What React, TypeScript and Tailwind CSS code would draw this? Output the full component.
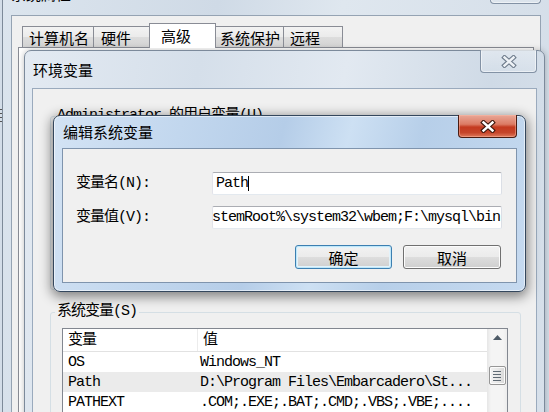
import React from "react";

const CJK = "font-['Noto_Sans_CJK_SC',sans-serif]";
const MONO = "font-['Liberation_Mono','Noto_Sans_CJK_SC',monospace] tracking-[-1px]";

function CloseX({ fill, outline }: { fill: string; outline: string }) {
  return (
    <svg width="16" height="13" viewBox="0 0 16 13">
      <path d="M3.5 2.5 L12.5 10.5 M12.5 2.5 L3.5 10.5" stroke={outline} strokeWidth="4.6" strokeLinecap="square" fill="none" />
      <path d="M3.5 2.5 L12.5 10.5 M12.5 2.5 L3.5 10.5" stroke={fill} strokeWidth="2.4" strokeLinecap="square" fill="none" />
    </svg>
  );
}

function InactiveClose({ className }: { className: string }) {
  return (
    <div
      className={`${className} -mt-px flex items-center justify-center rounded-b-[4px] border border-t-0 border-[#8392a5] bg-[linear-gradient(180deg,rgba(255,255,255,0.35),rgba(255,255,255,0.1))] shadow-[inset_0_0_0_1px_rgba(255,255,255,0.5)]`}
    >
      <CloseX fill="#eef2f6" outline="#6f7c8c" />
    </div>
  );
}

function Tab({ label, w, pl, selected, extra }: { label: string; w: string; pl: string; selected?: boolean; extra: string }) {
  return (
    <div
      className={`${w} ${pl} ${extra} ${CJK} flex items-center text-[15px] leading-none text-black border border-b-0 border-[#898c95] ${
        selected
          ? "h-[25px] -mb-px relative z-10 bg-white pb-[2px]"
          : "h-[21px] bg-[linear-gradient(180deg,#f3f3f3_0%,#ebebeb_50%,#dddddd_51%,#d3d3d3_100%)] pt-[1px]"
      }`}
    >
      {label}
    </div>
  );
}

function TextBox({ children, className }: { children: React.ReactNode; className?: string }) {
  return (
    <div
      className={`w-[290px] h-[23px] bg-white border border-[#abadb3] border-l-[#e2e3ea] border-r-[#dbdfe6] border-b-[#e3e9ef] rounded-[2px] flex items-center overflow-hidden whitespace-nowrap ${className ?? ""}`}
    >
      {children}
    </div>
  );
}

function Row({ a, b, sel }: { a: string; b: string; sel?: boolean }) {
  return (
    <div className={`h-[20px] flex items-center ${MONO} text-[15px] leading-none text-black ${sel ? "bg-[#ebebeb]" : ""}`}>
      <div className="w-[135px] pl-[5px] shrink-0">{a}</div>
      <div className="pl-[2px] whitespace-nowrap">{b}</div>
    </div>
  );
}

export default function App() {
  return (
    <div className="relative w-[549px] h-[412px] overflow-hidden bg-[#d3dde8]">
      {/* left desktop glyph */}
      <div className="absolute left-0 top-[109px] w-[4px] h-[13px] flex flex-col justify-between">
        <div className="h-[1px] bg-[#555]" />
        <div className="h-[1px] bg-[#555]" />
        <div className="h-[1px] bg-[#555]" />
        <div className="h-[1px] bg-[#555]" />
      </div>

      {/* Outer window: 系统属性 */}
      <div className="absolute left-[2px] top-[-19px] w-[548px] h-[450px] rounded-t-[7px] border border-[#7d8a99] bg-[linear-gradient(100deg,#dce5ee_0%,#cfdae6_35%,#dfe7ef_55%,#d2dce7_100%)] flex flex-col px-[8px]">
        <div className="h-[33px] shrink-0 flex items-start justify-between">
          <div className={`${CJK} text-[15px] leading-[20px] pt-[2px] text-black`}>系统属性</div>
          <InactiveClose className="w-[51px] h-[23px]" />
        </div>
        <div className="flex-1 border border-[#95a3b3] bg-[#f0f0f0] flex flex-col">
          <div className="pt-[7px] pl-[10px] flex items-end h-[31px]">
            <Tab label="计算机名" w="w-[72px]" pl="pl-[6px]" extra="" />
            <Tab label="硬件" w="w-[59px]" pl="pl-[7px]" extra="-ml-px" />
            <Tab label="高级" w="w-[67px]" pl="pl-[11px]" extra="-ml-[3px]" selected />
            <Tab label="系统保护" w="w-[71px]" pl="pl-[6px]" extra="-ml-[3px]" />
            <Tab label="远程" w="w-[60px]" pl="pl-[6px]" extra="-ml-px" />
          </div>
          <div className="flex-1 mx-[6px] border border-[#898c95] bg-white" />
        </div>
      </div>

      {/* 环境变量 window (inactive) */}
      <div className="absolute left-[24px] top-[50px] w-[521px] h-[400px] rounded-t-[7px] border border-[#7c8a9b] bg-[linear-gradient(100deg,#e3eaf2_0%,#d5dfea_30%,#e2e9f1_55%,#cfdae6_80%,#d8e1eb_100%)] shadow-[0_0_6px_rgba(0,0,0,0.25)] flex flex-col px-[7px]">
        <div className="h-[37px] shrink-0 flex items-start justify-between">
          <div className={`${CJK} text-[15px] leading-[20px] pt-[9px] pl-[1px] text-black`}>环境变量</div>
          <InactiveClose className="w-[57px] h-[23px]" />
        </div>
        <div className="flex-1 border border-[#9aaabd] bg-[#f0f0f0] flex flex-col">
          {/* user variables group */}
          <div className="mt-[27px] ml-[17px] mr-[15px] h-[174px] relative border border-[#d5dfe5] rounded-[3px] shrink-0">
            <div className={`absolute left-[4px] -top-[11px] px-[2px] bg-[#f0f0f0] ${MONO} text-[15px] leading-[20px] text-black whitespace-nowrap`}>
              Administrator 的用户变量(U)
            </div>
          </div>
          {/* system variables group */}
          <div className="mt-[22px] ml-[17px] mr-[15px] relative border border-[#d5dfe5] rounded-[3px] pt-[15px] pl-[11px] pr-[12px] shrink-0 h-[140px]">
            <div className={`absolute left-[4px] -top-[11px] px-[2px] bg-[#f0f0f0] ${MONO} text-[15px] leading-[20px] text-black whitespace-nowrap`}>
              系统变量(S)
            </div>
            <div className="border border-[#828790] bg-white flex h-[120px]">
              <div className="flex-1 flex flex-col">
                <div className={`h-[23px] flex border-b border-[#e2e2e2] ${MONO} text-[15px] leading-none text-black`}>
                  <div className="w-[135px] pl-[5px] flex items-center border-r border-[#ececec]">变量</div>
                  <div className="pl-[5px] flex items-center">值</div>
                </div>
                <Row a="OS" b="Windows_NT" />
                <Row a="Path" b="D:\Program Files\Embarcadero\St..." sel />
                <Row a="PATHEXT" b=".COM;.EXE;.BAT;.CMD;.VBS;.VBE;...." />
              </div>
              <div className="w-[20px] shrink-0 bg-[linear-gradient(90deg,#e6e6e6_0%,#f4f4f4_20%,#f4f4f4_80%,#ececec_100%)] flex flex-col items-center">
                <div className="h-[17px] w-full flex items-center justify-center">
                  <svg width="9" height="5" viewBox="0 0 9 5">
                    <path d="M0 5 L4.5 0 L9 5 Z" fill="#4d5a66" />
                  </svg>
                </div>
                <div className="mt-[20px] w-[17px] h-[19px] rounded-[2px] border border-[#979797] bg-[linear-gradient(90deg,#f3f3f3_0%,#e8e8e8_50%,#d8d8d8_100%)] shadow-[inset_0_0_0_1px_#fbfbfb] flex flex-col items-center justify-center gap-[2px]">
                  <div className="w-[8px] h-[1px] bg-[#5f6a74]" />
                  <div className="w-[8px] h-[1px] bg-[#5f6a74]" />
                  <div className="w-[8px] h-[1px] bg-[#5f6a74]" />
                  <div className="w-[8px] h-[1px] bg-[#5f6a74]" />
                </div>
              </div>
            </div>
          </div>
        </div>
      </div>

      {/* 编辑系统变量 dialog (active) */}
      <div className="absolute left-[53px] top-[115px] w-[473px] h-[177px] rounded-[7px] border border-[#34475d] bg-[linear-gradient(105deg,#d3e3f4_0%,#c2d7ee_25%,#b5cde8_45%,#cde0f3_58%,#b7cfe9_72%,#c6daf0_100%)] shadow-[inset_0_0_0_1px_rgba(255,255,255,0.55),0_3px_12px_2px_rgba(0,0,0,0.45)] flex flex-col px-[8px] pb-[8px]">
        <div className="h-[32px] shrink-0 flex items-start justify-between">
          <div className={`${CJK} text-[15px] leading-[20px] pt-[6px] pl-[1px] text-black`}>编辑系统变量</div>
          <div className="-mt-px w-[59px] h-[23px] rounded-b-[4px] border border-t-0 border-[#4a1c12] bg-[linear-gradient(180deg,#e9a797_0%,#dc7b64_42%,#c43a1f_55%,#c5452b_80%,#df7a5c_100%)] shadow-[inset_0_0_0_1px_rgba(255,190,170,0.45)] flex items-center justify-center">
            <CloseX fill="#ffffff" outline="#3d160d" />
          </div>
        </div>
        <div className="flex-1 border border-[#7f94ad] bg-[#f0f0f0] flex flex-col pt-[23px] pl-[13px] pr-[14px]">
          <div className="flex items-center h-[23px]">
            <div className={`w-[136px] ${MONO} text-[15px] leading-none text-black`}>变量名(N):</div>
            <TextBox className="pl-[3px]">
              <span className={`${MONO} text-[15px] leading-none text-black`}>Path</span>
              <span className="w-[1px] h-[15px] bg-black" />
            </TextBox>
          </div>
          <div className="flex items-center h-[23px] mt-[11px]">
            <div className={`w-[136px] ${MONO} text-[15px] leading-none text-black`}>变量值(V):</div>
            <TextBox className="justify-end pr-[1px]">
              <span className={`${MONO} text-[15px] leading-none text-black shrink-0`}>
                %SystemRoot%\system32;%SystemRoot%;%SystemRoot%\system32\wbem;F:\mysql\bin
              </span>
            </TextBox>
          </div>
          <div className="flex justify-end gap-[11px] mt-[16px] pr-[1px]">
            <div className={`w-[97px] h-[24px] rounded-[3px] border border-[#3c7fb1] bg-[linear-gradient(180deg,#f2f2f2_0%,#ebebeb_50%,#dddddd_51%,#cfcfcf_100%)] shadow-[inset_0_0_0_1px_#bfe7f9,inset_0_0_0_2px_#e3f3fb] flex items-center justify-center ${CJK} text-[15px] leading-none text-black`}>
              确定
            </div>
            <div className={`w-[98px] h-[24px] rounded-[3px] border border-[#707070] bg-[linear-gradient(180deg,#f2f2f2_0%,#ebebeb_50%,#dddddd_51%,#cfcfcf_100%)] shadow-[inset_0_0_0_1px_#fcfcfc] flex items-center justify-center ${CJK} text-[15px] leading-none text-black`}>
              取消
            </div>
          </div>
        </div>
      </div>
    </div>
  );
}
